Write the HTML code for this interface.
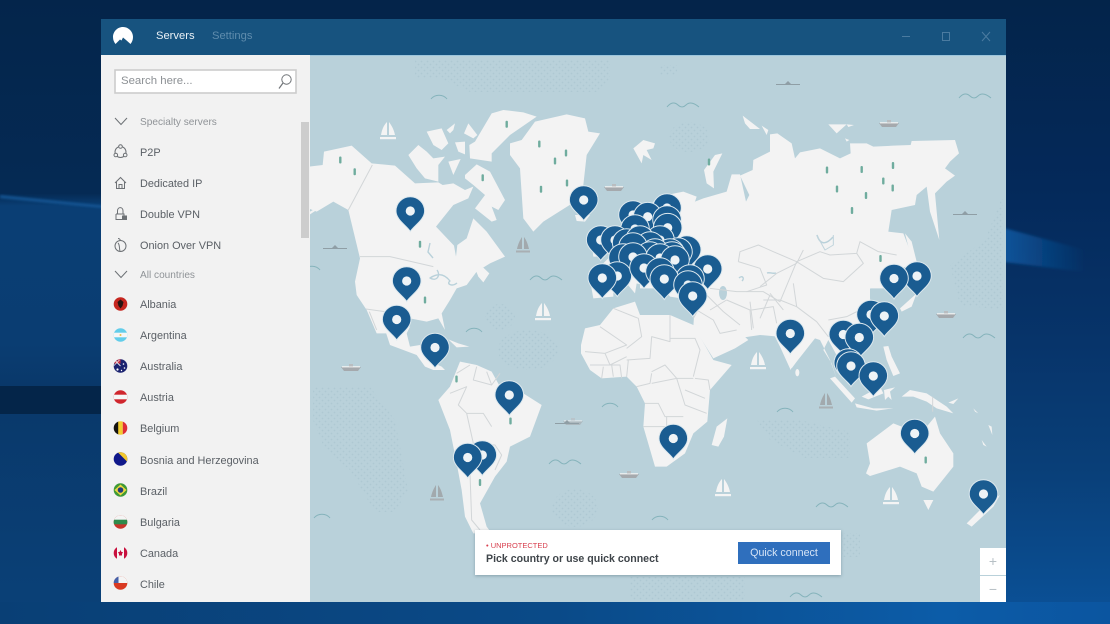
<!DOCTYPE html>
<html><head><meta charset="utf-8"><title>NordVPN</title>
<style>
html,body{margin:0;padding:0;width:1110px;height:624px;overflow:hidden;background:#04264c;font-family:"Liberation Sans",sans-serif}
svg.a{position:absolute;left:0;top:0}
.t{position:absolute;white-space:nowrap;line-height:14px;font-size:10.9px;color:#5b6066}
.h{font-size:10.1px;color:#8f9397}
</style></head><body>
<svg class="a" width="1110" height="624" viewBox="0 0 1110 624">
<defs>
<linearGradient id="wl" x1="0" y1="0" x2="0" y2="1"><stop offset="0" stop-color="#04254b"/><stop offset=".31" stop-color="#052a54"/><stop offset=".33" stop-color="#0a3e74"/><stop offset=".55" stop-color="#0a3d72"/><stop offset=".62" stop-color="#09386a"/><stop offset="1" stop-color="#0a4178"/></linearGradient>
<linearGradient id="wr" x1="0" y1="0" x2="0" y2="1"><stop offset="0" stop-color="#03244a"/><stop offset=".3" stop-color="#04295a"/><stop offset=".55" stop-color="#07346a"/><stop offset=".75" stop-color="#093f78"/><stop offset="1" stop-color="#0b5299"/></linearGradient>
<linearGradient id="wb" x1="0" y1="0" x2="1" y2="0"><stop offset="0" stop-color="#093f75"/><stop offset=".5" stop-color="#0a4a88"/><stop offset=".85" stop-color="#0c5ca8"/><stop offset="1" stop-color="#0b55a0"/></linearGradient>
<linearGradient id="ws" gradientUnits="userSpaceOnUse" x1="1006" y1="240" x2="1085" y2="240"><stop offset="0" stop-color="#0f5ca6" stop-opacity=".8"/><stop offset="1" stop-color="#0f5ca6" stop-opacity="0"/></linearGradient>
<filter id="b3"><feGaussianBlur stdDeviation="1.2"/></filter>
<pattern id="dt" width="6" height="6" patternUnits="userSpaceOnUse"><circle cx="1.5" cy="1.5" r=".9" fill="#a6c3cd"/><circle cx="4.5" cy="4.5" r=".9" fill="#a6c3cd"/></pattern>
<clipPath id="mp"><rect x="310" y="55" width="696" height="547"/></clipPath>
<clipPath id="fc"><circle r="6.8"/></clipPath>
<g id="pin"><path d="M0,20.5C-3,15-14.3,9-14.3,0A14.3,14.3 0 1 1 14.3,0C14.3,9 3,15 0,20.5Z" fill="#1a5c91" stroke="#dce8ee" stroke-width="1"/><circle r="4.6" fill="#eef3f6"/></g>
<path id="wv" d="M-16,2C-12,-3-8,-3-5,0C-2,3 1,2 3,0C6,-3 10,-3 16,2" fill="none" stroke="#85b3bb" stroke-width="1"/>
<path id="wv2" d="M-8,2C-4,-3 4,-3 8,2" fill="none" stroke="#85b3bb" stroke-width="1"/>
<g id="sw"><path d="M-1,-10L-1,3L-7,3C-6,-3-4,-7-1,-10ZM1,-10C4,-6 6,-2 7,3L1,3Z" fill="#f4f4f4"/><rect x="-8" y="5" width="16" height="2.2" fill="#f4f4f4"/></g>
<g id="sg"><path d="M-1,-9L-1,3L-6,3C-5,-2-3,-6-1,-9ZM1,-9C4,-5 5,-1 6,3L1,3Z" fill="#a2a9ad"/><rect x="-7" y="4.500" width="14" height="2" fill="#a9afb3"/></g>
<g id="sh"><path d="M-10,-1L10,-1L7,3L-7,3Z" fill="#a5a9ad"/><rect x="-9" y="-1.800" width="18" height="1.200" fill="#f2f2f2"/><rect x="-2" y="-4" width="4" height="2.500" fill="#b9bdc0"/></g>
<g id="sb"><rect x="-12" y="0" width="24" height="1" fill="#8f9ea5"/><path d="M-3,0L0,-3L3,0Z" fill="#8f9ea5"/></g>
<rect id="tr" x="-1.200" y="-3.500" width="2.400" height="7" rx="1" fill="#6fac9e"/>
</defs>

<!-- wallpaper -->
<rect x="0" y="0" width="1110" height="624" fill="#04264c"/>
<rect x="0" y="0" width="105" height="624" fill="url(#wl)"/>
<rect x="1004" y="0" width="106" height="624" fill="url(#wr)"/>
<path d="M1004,228L1085,250L1085,272L1004,262Z" fill="url(#ws)" filter="url(#b3)"/>
<rect x="0" y="386" width="105" height="28" fill="#042549"/>
<rect x="0" y="602" width="1110" height="22" fill="url(#wb)"/>
<rect x="100" y="0" width="910" height="19" fill="#04244a"/>
<path d="M0,195L105,206L105,208L0,198Z" fill="#1a67ad" opacity=".7" filter="url(#b3)"/>

<!-- window -->
<rect x="101" y="19" width="905" height="36" fill="#17537f"/>
<rect x="310" y="55" width="696" height="547" fill="#b9d1da"/>
<rect x="310" y="55" width="696" height="1" fill="#9cc5dc"/>
<rect x="101" y="55" width="209" height="547" fill="#f2f2f2"/>

<g clip-path="url(#mp)">
<!-- dots -->
<g fill="url(#dt)" opacity=".6">
<path d="M415,60H610V78L600,92H470L440,78H415Z"/>
<rect x="660" y="65" width="17" height="10"/>
<ellipse cx="689" cy="137" rx="20" ry="15"/>
<path d="M1003,195V310L960,305L950,265L985,240Z"/>
<ellipse cx="500" cy="317" rx="15" ry="13"/>
<ellipse cx="528" cy="350" rx="30" ry="20"/>
<path d="M313,387H370L395,420L408,490L395,512H375L350,470L325,450L313,420Z"/>
<ellipse cx="575" cy="508" rx="23" ry="19"/>
<path d="M757,420H800L850,432V458H805L770,440Z"/>
<rect x="842" y="533" width="18" height="24"/>
<rect x="630" y="577" width="115" height="23"/>
<ellipse cx="740" cy="550" rx="4" ry="4"/>
</g>
<g fill="#f3f3f3">
<!-- north america / arctic -->
<g transform="translate(310,55) scale(.33333)">
<path d="M-5,335L38,330L42,290L125,272L185,325L255,332L315,385L385,382L398,390L430,385L465,405L490,395L475,430L430,450L378,515L432,572L438,605L442,570L470,550L490,490L530,530L585,605L540,625L500,650L470,690L440,700L420,735L395,775L405,825L385,790L350,800L300,790L290,835L200,835L170,765L140,720L135,680L150,610L115,465L70,440L20,470L-5,460Z"/>
<path d="M295,300L325,270L350,290L370,310L405,305L385,330L385,380L345,370L320,340Z"/>
<path d="M350,230L395,220L415,265L395,285L370,270Z"/>
<path d="M410,225L435,205L430,225L420,235Z"/>
<path d="M462,235L475,205L502,240L490,250Z"/>
<path d="M435,262L465,260L465,298L445,290Z"/>
<path d="M415,320L452,312L430,360Z"/>
<path d="M478,270L495,260L545,175L580,165L640,172L680,185L600,240L545,295L545,320L480,310Z"/>
<path d="M465,360L500,328L540,350L585,435L565,465L545,455L560,495L545,500L495,460L525,420L490,390L465,370Z"/>
<path d="M600,265L635,255L675,200L770,178L825,190L835,230L870,235L830,300L820,390L795,440L700,500L670,530L640,490L630,340L600,300Z"/>
<path d="M795,480L840,480L825,500L800,498Z"/>
<path d="M970,280L1000,255L1035,265L1030,280L1010,285L1025,315L1000,300L995,325Z"/>
<path d="M497,645L520,638L538,655L520,682L505,665Z"/>
<path d="M0,470L35,450L20,465L0,478Z"/>
</g>
<!-- russia -->
<g transform="translate(660,55) scale(.33333)">
<path d="M-60,480L0,420L50,440L90,465L105,440L130,430L200,410L215,358L240,358L258,440L268,420L240,362L278,345L280,315L330,290L330,238L352,235L395,265L405,310L420,292L480,280L540,310L572,295L570,265L620,265L640,275L700,272L752,270L755,258L885,255L897,295L870,320L855,340L885,362L860,380L825,415L838,555L810,470L800,395L770,420L765,450L695,465L685,530L730,535L755,600L770,625L720,640L700,700L-60,700Z"/>
<path d="M132,345L165,300L187,295L160,350L162,400L140,385Z"/>
<path d="M248,182L265,195L300,222L270,222L255,205ZM305,212L325,225L320,240Z"/>
<path d="M505,208L560,208L530,235ZM560,208L582,210L565,216ZM555,250L568,255L560,260Z"/>
<path d="M735,535L755,560L770,620L755,615Z"/>
</g>
<!-- europe -->
<g transform="translate(570,190) scale(.33333)">
<path d="M240,55L290,15L340,5L380,20L370,50L400,80L510,80L510,260L430,290L420,330L340,320L300,310L240,290L200,280L195,310L170,280L130,290L130,320L70,325L60,270L90,230L120,200L140,130L170,120L200,130L210,100Z"/>
<path d="M60,120L110,110L105,200L70,200Z"/>
</g>
<!-- africa / middle east -->
<g transform="translate(570,290) scale(.33333)">
<path d="M33,165L45,115L90,105L130,55L195,35L210,75L300,75L370,105L430,210L485,225L420,300L412,395L370,430L345,490L290,530L255,530L220,410L225,340L200,290L170,260L95,265L60,240L33,190Z"/>
<path d="M425,465L440,410L472,385L462,440L445,470Z"/>
<path d="M250,-100L900,-100L900,100L800,125L740,120L700,140L680,190L662,240L630,170L610,130L540,120L500,100L470,90L535,150L495,175L430,205L370,110L372,80L365,30L300,20L270,-20Z"/>
<ellipse cx="682" cy="248" rx="6" ry="11"/>
</g>
<!-- SE asia -->
<g transform="translate(760,250) scale(.33333)">
<path d="M-100,0L360,0L365,70L345,105L325,120L335,170L300,230L265,290L240,310L255,335L235,325L205,270L190,300L215,340L230,385L210,330L180,270L165,265L110,335L95,355L75,300L55,260L0,255L-100,270Z"/>
<path d="M420,175L470,130L455,170L425,185Z"/>
<path d="M370,290L385,288L395,320L420,370L400,378L380,330Z"/>
</g>
<!-- central & south america -->
<g transform="translate(310,330) scale(.33333)">
<path d="M222,-10L240,45L320,75L345,110L370,120L405,120L395,110L350,90L335,65L330,45L300,50L290,10L300,-10Z"/>
<path d="M415,28L445,40L478,50L440,52Z"/>
<path d="M385,210L420,170L450,95L500,105L545,125L570,170L640,190L695,225L660,320L600,350L590,395L555,440L510,520L530,590L545,610L490,610L465,560L455,480L440,400L420,300Z"/>
</g>
<!-- oceania -->
<g transform="translate(660,330) scale(.33333)">
<path d="M620,340L700,280L725,290L800,290L825,260L840,310L880,370L880,410L820,485L785,470L770,430L720,410L630,438L618,430L630,400Z"/>
<path d="M790,510L820,510L805,540Z"/>
<path d="M920,580L960,540L1020,495L1000,530L935,590Z"/>
<path d="M510,145L525,140L585,205L575,218Z"/>
<path d="M585,220L640,235L700,235L650,242L590,232Z"/>
<path d="M605,200L660,170L670,190L625,208Z"/>
<path d="M672,180L705,172L690,185L695,210L685,200L675,210Z"/>
<path d="M725,200L750,180L800,190L860,230L880,250L830,235L800,215L760,200Z"/>
<path d="M865,218L895,205L880,222Z"/>
<path d="M985,285L995,290L997,315ZM965,330L980,350L970,345ZM940,235L955,250L945,245Z"/>
</g>
</g>

<!-- water features -->
<g fill="#b9d1da">
<ellipse cx="723" cy="293" rx="4" ry="7"/>
<path d="M658,301H690L685,310H655Z"/>
<path d="M662,274L690,272L695,282L668,286Z" fill="#f3f3f3"/>
</g>
<g fill="none" stroke="#b9d1da" stroke-width="1.4" stroke-linejoin="round">
<path d="M437,270C441,275 437,282 430,278C436,274 443,272 450,281C446,284 452,287 457,283"/>
<path d="M430,243L428,252L433,258"/>
<path d="M817,235C820,245 826,245 833,237"/>
<path d="M739,278C742,275 745,278 742,281"/>
<path d="M767,273C770,272 772,274 776,273"/>
<path d="M883,293L873,298"/>
</g>

<!-- borders -->
<g fill="none" stroke="#d2d6d8" stroke-width="3" stroke-linejoin="round">
<g transform="translate(310,55) scale(.33333)">
<path d="M187,330L115,465"/>
<path d="M150,605L240,605L370,635"/>
<path d="M168,762L225,770L290,795"/>
<path d="M178,770L200,825"/>
</g>
<g transform="translate(660,55) scale(.33333)">
<path d="M235,620L240,590L295,570L340,590L410,620L480,590L510,600L590,595L600,560L655,590L710,600"/>
<path d="M410,620L490,670L550,680L610,625L590,595"/>
<path d="M235,620L300,640L320,690L260,710"/>
<path d="M150,700L230,710L310,710L360,740L410,620"/>
<path d="M100,790L140,720L190,770L240,810M270,740L280,820M330,720L300,790"/>
<path d="M470,540L495,585L520,570L520,540" stroke="#c0d4dc"/>
</g>
<g transform="translate(570,290) scale(.33333)">
<path d="M90,110L170,165L105,190M45,185L105,190L120,225L170,200M130,55L205,85L215,140L170,175M170,210L240,205L245,140L300,155L300,75M300,145L375,145L390,180L370,260M245,245L285,225L320,265L370,265M170,260L175,210M200,290L240,280L245,250M245,280L320,265L345,345L410,370M225,340L265,340L285,380L340,380M220,410L290,410L290,380M290,410L300,470M345,300L405,325M420,300L415,270L375,265M60,225L150,225L155,265M100,230L95,265M125,225L130,260"/>
<path d="M380,60L430,90L450,130L500,120M470,30L540,60L545,120M545,60L610,50L620,100M420,60L470,30M600,10L640,60"/>
</g>
<g transform="translate(760,250) scale(.33333)">
<path d="M0,110L50,70L110,40M10,150L60,150L110,170L170,215M170,215L205,260M110,40L130,0M110,170L100,100M205,210L260,200L300,180"/>
</g>
<g transform="translate(310,330) scale(.33333)">
<path d="M440,130L480,105M420,190L470,170L445,225L470,250L520,250L545,290M500,110L490,150L545,165L570,130M470,250L490,340L555,345L575,375L555,420M480,430L485,570L510,600M530,125L545,165"/>
</g>
<g transform="translate(660,330) scale(.33333)">
<path d="M818,200L818,245"/>
</g>
</g>

<!-- trees -->
<g transform="translate(310,55)">
<use href="#tr" x="30.300" y="105"/><use href="#tr" x="44.700" y="116.700"/><use href="#tr" x="110" y="189.300"/><use href="#tr" x="115" y="245"/><use href="#tr" x="196.700" y="69.300"/><use href="#tr" x="229.300" y="89"/><use href="#tr" x="245" y="106"/><use href="#tr" x="256" y="98"/><use href="#tr" x="231" y="134.300"/><use href="#tr" x="257" y="128"/><use href="#tr" x="172.700" y="122.700"/>
</g>
<g transform="translate(660,55)">
<use href="#tr" x="49" y="107"/><use href="#tr" x="167" y="115"/><use href="#tr" x="201.700" y="114.500"/><use href="#tr" x="233" y="110.500"/><use href="#tr" x="223.300" y="126"/><use href="#tr" x="232.700" y="133"/><use href="#tr" x="177" y="134"/><use href="#tr" x="206" y="140.500"/><use href="#tr" x="192" y="155.500"/><use href="#tr" x="220.500" y="203.500"/>
</g>
<use href="#tr" x="456.500" y="379"/><use href="#tr" x="510.500" y="421"/><use href="#tr" x="480" y="482.500"/><use href="#tr" x="925.700" y="460"/>

<!-- waves -->
<use href="#wv2" x="439" y="97"/><use href="#wv" x="546" y="278"/><use href="#wv" x="683" y="105"/><use href="#wv" x="975" y="96"/><use href="#wv2" x="610" y="405"/><use href="#wv" x="565" y="462"/><use href="#wv2" x="322" y="516"/><use href="#wv" x="979" y="336"/><use href="#wv2" x="785" y="410"/><use href="#wv" x="832" y="505"/><use href="#wv" x="806" y="595"/><use href="#wv2" x="660" y="518"/><use href="#wv2" x="474" y="330"/><use href="#wv2" x="312" y="268"/>

<!-- boats -->
<use href="#sw" x="388" y="132"/><use href="#sw" x="543" y="313"/><use href="#sw" x="723" y="489"/><use href="#sw" x="891" y="497"/><use href="#sw" x="758" y="362"/>
<use href="#sg" x="523" y="246"/><use href="#sg" x="437" y="494"/><use href="#sg" x="826" y="402"/>
<use href="#sh" x="614" y="188"/><use href="#sh" x="889" y="124"/><use href="#sh" x="946" y="315"/><use href="#sh" x="351" y="368"/><use href="#sh" x="629" y="475"/><use href="#sh" x="573" y="422" opacity=".6"/>
<use href="#sb" x="335" y="248"/><use href="#sb" x="788" y="84"/><use href="#sb" x="965" y="214"/><use href="#sb" x="567" y="423"/>

<!-- pins -->
<use href="#pin" x="410.300" y="211"/><use href="#pin" x="583.700" y="200"/><use href="#pin" x="406.700" y="281"/><use href="#pin" x="396.700" y="319.500"/><use href="#pin" x="435" y="347.500"/><use href="#pin" x="509.300" y="395"/>
<use href="#pin" x="482.300" y="455"/><use href="#pin" x="467.700" y="457.500"/>
<use href="#pin" x="673.300" y="438.500"/><use href="#pin" x="790.300" y="333.500"/><use href="#pin" x="914.700" y="433.500"/><use href="#pin" x="983.500" y="494"/>
<use href="#pin" x="917" y="276"/><use href="#pin" x="894" y="278.500"/>
<use href="#pin" x="871" y="314.500"/><use href="#pin" x="884.300" y="316"/>
<use href="#pin" x="843.300" y="334.500"/><use href="#pin" x="859.300" y="337.500"/>
<use href="#pin" x="848.300" y="363"/><use href="#pin" x="851" y="366"/><use href="#pin" x="873.300" y="376"/>
<!-- europe cluster -->
<use href="#pin" x="667" y="208"/><use href="#pin" x="633" y="215"/><use href="#pin" x="647.700" y="216.700"/><use href="#pin" x="667" y="220"/><use href="#pin" x="635" y="229"/><use href="#pin" x="667.700" y="227.700"/>
<use href="#pin" x="600.700" y="240"/><use href="#pin" x="615" y="240"/><use href="#pin" x="660" y="240"/><use href="#pin" x="626.700" y="243"/><use href="#pin" x="640" y="240"/>
<use href="#pin" x="686.700" y="250"/><use href="#pin" x="678" y="252"/><use href="#pin" x="670" y="253"/><use href="#pin" x="650" y="246"/><use href="#pin" x="633" y="247"/>
<use href="#pin" x="623" y="258"/><use href="#pin" x="655" y="253"/><use href="#pin" x="650" y="256"/><use href="#pin" x="672" y="256"/><use href="#pin" x="633" y="257"/><use href="#pin" x="660" y="258"/><use href="#pin" x="675" y="260"/>
<use href="#pin" x="707.700" y="269"/><use href="#pin" x="617.300" y="276"/><use href="#pin" x="602.300" y="278"/><use href="#pin" x="644" y="268"/><use href="#pin" x="660" y="272"/><use href="#pin" x="690" y="279"/><use href="#pin" x="664.300" y="279"/><use href="#pin" x="688" y="285"/><use href="#pin" x="692.700" y="296"/>
</g>

<!-- scrollbar -->
<rect x="301" y="122" width="8" height="116" fill="#cdcdcd"/>
<!-- search -->
<rect x="115" y="70" width="181" height="23" fill="#fff" stroke="#cccccc" stroke-width="1.600"/>
<circle cx="286.500" cy="79.500" r="4.700" fill="none" stroke="#707478" stroke-width="1"/><path d="M283,83L279,88.500" stroke="#707478" stroke-width="1.200"/>
<!-- logo -->
<path d="M123,27C117,27 113,32 113,37C113,40 114,42 115.500,44L120,39.500L121.500,40.500L123,37.500L126,40L130.500,44C132,42 133,40 133,37C133,32 129,27 123,27Z" fill="#fff"/>
<!-- window buttons -->
<g stroke="#4b7ba0" fill="none" stroke-width="1"><path d="M902,36.500H910"/><rect x="942.500" y="32.500" width="7" height="8"/><path d="M982,32L990,41M990,32L982,41"/></g>
<!-- sidebar icons -->
<g fill="none" stroke="#6d7175" stroke-width="1">
<path d="M115,118L121,124.500L127,118"/>
<path d="M115,271L121,277.500L127,271"/>
<circle cx="120.500" cy="152" r="5.500"/><circle cx="120.500" cy="146.500" r="1.800" fill="#f2f2f2"/><circle cx="115.800" cy="155" r="1.800" fill="#f2f2f2"/><circle cx="125.200" cy="155" r="1.800" fill="#f2f2f2"/>
<path d="M115,183L120.500,177.500L126,183M116.500,182V188.500H124.500V182M119,188.500V184.500H122V188.500"/>
<path d="M116,214V219.500H123M116,214H124V217M117.500,214V211C117.500,206.500 123,206.500 123,211V214"/><rect x="122.500" y="216" width="4" height="3.500" fill="#6d7175"/>
<circle cx="120.500" cy="246" r="5.500"/><path d="M120.500,240.500C120,239 119,238.500 118,238.500M118,243C120,245 119,248 120,251"/>
</g>
<!-- flags -->
<g transform="translate(120.500,304)" clip-path="url(#fc)"><rect x="-8" y="-8" width="16" height="16" fill="#c6261f"/><path d="M0,-4.500L3,-2L2,2L0,4.500L-2,2L-3,-2Z" fill="#2a1512"/></g>
<g transform="translate(120.500,335)" clip-path="url(#fc)"><rect x="-8" y="-8" width="16" height="16" fill="#62cdea"/><rect x="-8" y="-2.300" width="16" height="4.600" fill="#f6f6f6"/><circle r="1" fill="#e8c14d"/></g>
<g transform="translate(120.500,366)" clip-path="url(#fc)"><rect x="-8" y="-8" width="16" height="16" fill="#1b2370"/><path d="M-8,-2.500H0V-8H-3V-5L-8,-7Z" fill="#c73043"/><path d="M-7,-7L0,0" stroke="#eee" stroke-width=".9"/><path d="M-1,-6L-7,0" stroke="#eee" stroke-width=".7"/><circle cx="3" cy="-2" r=".8" fill="#fff"/><circle cx="4" cy="2" r=".8" fill="#fff"/><circle cx="-3" cy="3.500" r="1.100" fill="#fff"/><circle cx="1" cy="4.500" r=".7" fill="#fff"/></g>
<g transform="translate(120.500,397)" clip-path="url(#fc)"><rect x="-8" y="-8" width="16" height="16" fill="#d0262d"/><rect x="-8" y="-2.300" width="16" height="4.600" fill="#f6f6f6"/></g>
<g transform="translate(120.500,428)" clip-path="url(#fc)"><rect x="-8" y="-8" width="6" height="16" fill="#15130f"/><rect x="-2.300" y="-8" width="4.600" height="16" fill="#f2cc2f"/><rect x="2.300" y="-8" width="6" height="16" fill="#df2e36"/></g>
<g transform="translate(120.500,459)" clip-path="url(#fc)"><rect x="-8" y="-8" width="16" height="16" fill="#10188a"/><path d="M-4,-8L8,4V-8Z" fill="#f2c82e"/></g>
<g transform="translate(120.500,490)" clip-path="url(#fc)"><rect x="-8" y="-8" width="16" height="16" fill="#3f9a37"/><path d="M0,-5.500L6,0L0,5.500L-6,0Z" fill="#efd940"/><circle r="2.800" fill="#233c80"/></g>
<g transform="translate(120.500,522)" clip-path="url(#fc)"><rect x="-8" y="-8" width="16" height="16" fill="#c9352b"/><rect x="-8" y="-8" width="16" height="6" fill="#f4f4f4"/><rect x="-8" y="-2.300" width="16" height="4.600" fill="#2f8b4c"/></g>
<g transform="translate(120.500,553)" clip-path="url(#fc)"><rect x="-8" y="-8" width="16" height="16" fill="#f4f4f4"/><rect x="-8" y="-8" width="4.500" height="16" fill="#c8103e"/><rect x="3.500" y="-8" width="4.500" height="16" fill="#c8103e"/><path d="M0,-3L1,-1L2.500,-1L1.500,1L1.500,2.500H-1.500V1L-2.500,-1H-1Z" fill="#c8103e"/></g>
<g transform="translate(120.500,583)" clip-path="url(#fc)"><rect x="-8" y="-8" width="16" height="16" fill="#d93a22"/><rect x="-8" y="-8" width="16" height="8" fill="#f4f4f4"/><rect x="-8" y="-8" width="6" height="8" fill="#4560a8"/></g>
</svg>

<div class="t" style="left:156px;top:29px;color:#eaf1f6;font-size:11.2px">Servers</div>
<div class="t" style="left:212px;top:29px;color:#5f8cad;font-size:11.2px">Settings</div>
<div class="t" style="left:121px;top:74px;color:#8c9094;font-size:11.4px">Search here...</div>
<div class="t h" style="left:140px;top:116px">Specialty servers</div>
<div class="t" style="left:140px;top:146px">P2P</div>
<div class="t" style="left:140px;top:177px">Dedicated IP</div>
<div class="t" style="left:140px;top:208px">Double VPN</div>
<div class="t" style="left:140px;top:239px">Onion Over VPN</div>
<div class="t h" style="left:140px;top:269px">All countries</div>
<div class="t" style="left:140px;top:298px">Albania</div>
<div class="t" style="left:140px;top:329px">Argentina</div>
<div class="t" style="left:140px;top:360px">Australia</div>
<div class="t" style="left:140px;top:391px">Austria</div>
<div class="t" style="left:140px;top:422px">Belgium</div>
<div class="t" style="left:140px;top:454px">Bosnia and Herzegovina</div>
<div class="t" style="left:140px;top:485px">Brazil</div>
<div class="t" style="left:140px;top:516px">Bulgaria</div>
<div class="t" style="left:140px;top:547px">Canada</div>
<div class="t" style="left:140px;top:578px">Chile</div>

<!-- status card -->
<div style="position:absolute;left:475px;top:530px;width:366px;height:45px;background:#fff;box-shadow:0 1px 3px rgba(70,100,115,.45)"></div>
<div class="t" style="left:486px;top:539px;color:#d8404f;font-size:7.5px">&#8226; UNPROTECTED</div>
<div class="t" style="left:486px;top:552px;color:#3f454a;font-size:10.6px;font-weight:bold">Pick country or use quick connect</div>
<div style="position:absolute;left:738px;top:542px;width:92px;height:22px;background:#2f6fbd;color:#d6e4f6;font-size:10.7px;line-height:22px;text-align:center">Quick connect</div>
<!-- zoom -->
<div style="position:absolute;left:980px;top:548px;width:26px;height:27px;background:#fff;color:#b7c0c5;font-size:14px;line-height:27px;text-align:center">+</div>
<div style="position:absolute;left:980px;top:576px;width:26px;height:26px;background:#fff;color:#b7c0c5;font-size:14px;line-height:26px;text-align:center">&#8722;</div>
</body></html>
